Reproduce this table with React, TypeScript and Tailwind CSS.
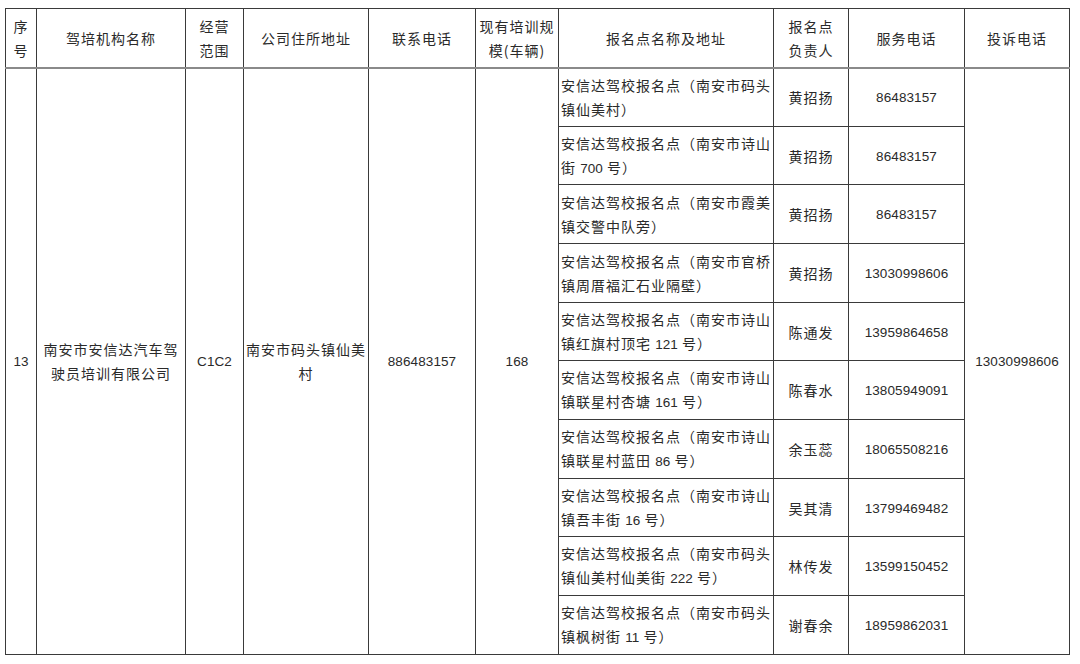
import React from 'react';

// One enrolment point: name/address lines, person in charge, service phone
interface Point {
  lines: React.ReactNode[];
  person: string;
  phone: string;
}

const Num = ({ children }: { children: React.ReactNode }) => (
  <span className="font-['Liberation_Sans',sans-serif] text-[13.5px] tracking-[0.1px]">{children}</span>
);

const POINTS: Point[] = [
  { lines: ['安信达驾校报名点（南安市码头', '镇仙美村）'], person: '黄招扬', phone: '86483157' },
  { lines: ['安信达驾校报名点（南安市诗山', <>街 <Num>700</Num> 号）</>], person: '黄招扬', phone: '86483157' },
  { lines: ['安信达驾校报名点（南安市霞美', '镇交警中队旁）'], person: '黄招扬', phone: '86483157' },
  { lines: ['安信达驾校报名点（南安市官桥', '镇周厝福汇石业隔壁）'], person: '黄招扬', phone: '13030998606' },
  { lines: ['安信达驾校报名点（南安市诗山', <>镇红旗村顶宅 <Num>121</Num> 号）</>], person: '陈通发', phone: '13959864658' },
  { lines: ['安信达驾校报名点（南安市诗山', <>镇联星村杏塘 <Num>161</Num> 号）</>], person: '陈春水', phone: '13805949091' },
  { lines: ['安信达驾校报名点（南安市诗山', <>镇联星村蓝田 <Num>86</Num> 号）</>], person: '余玉蕊', phone: '18065508216' },
  { lines: ['安信达驾校报名点（南安市诗山', <>镇吾丰街 <Num>16</Num> 号）</>], person: '吴其清', phone: '13799469482' },
  { lines: ['安信达驾校报名点（南安市码头', <>镇仙美村仙美街 <Num>222</Num> 号）</>], person: '林传发', phone: '13599150452' },
  { lines: ['安信达驾校报名点（南安市码头', <>镇枫树街 <Num>11</Num> 号）</>], person: '谢春余', phone: '18959862031' },
];

const ROW_HEIGHTS = ['h-[59px]', 'h-[58px]', 'h-[59px]', 'h-[59px]', 'h-[58px]', 'h-[59px]', 'h-[59px]', 'h-[58px]', 'h-[59px]', 'h-[59px]'];

const cell = 'border border-[#3a3a3a] text-center align-middle p-0';
const head = 'border border-[#3a3a3a] border-b-2 border-b-[#8a8a8a] text-center align-middle p-0';

export default function App() {
  return (
    <div className="w-[1080px] h-[664px] bg-white pt-[8px] pl-[5px] font-['Noto_Sans_CJK_SC',sans-serif] text-[14px] leading-[24px] tracking-[1px] text-[#2a2a2a]">
      <table className="table-fixed border-collapse w-[1064px]">
        <colgroup>
          <col className="w-[31px]" />
          <col className="w-[149px]" />
          <col className="w-[58px]" />
          <col className="w-[125px]" />
          <col className="w-[107px]" />
          <col className="w-[83px]" />
          <col className="w-[215px]" />
          <col className="w-[75px]" />
          <col className="w-[116px]" />
          <col className="w-[105px]" />
        </colgroup>
        <thead>
          <tr className="h-[59px]">
            <th className={`${head} font-normal`}>序<br />号</th>
            <th className={`${head} font-normal`}>驾培机构名称</th>
            <th className={`${head} font-normal`}>经营<br />范围</th>
            <th className={`${head} font-normal`}>公司住所地址</th>
            <th className={`${head} font-normal`}>联系电话</th>
            <th className={`${head} font-normal`}>现有培训规<br />模(车辆)</th>
            <th className={`${head} font-normal`}>报名点名称及地址</th>
            <th className={`${head} font-normal`}>报名点<br />负责人</th>
            <th className={`${head} font-normal`}>服务电话</th>
            <th className={`${head} font-normal`}>投诉电话</th>
          </tr>
        </thead>
        <tbody>
          {POINTS.map((p, i) => (
            <tr key={i} className={ROW_HEIGHTS[i]}>
              {i === 0 && (
                <>
                  <td rowSpan={10} className={cell}><Num>13</Num></td>
                  <td rowSpan={10} className={`${cell} px-[4px]`}>南安市安信达汽车驾<br />驶员培训有限公司</td>
                  <td rowSpan={10} className={cell}><Num>C1C2</Num></td>
                  <td rowSpan={10} className={`${cell} px-[2px]`}>南安市码头镇仙美<br />村</td>
                  <td rowSpan={10} className={cell}><Num>886483157</Num></td>
                  <td rowSpan={10} className={cell}><Num>168</Num></td>
                </>
              )}
              <td className={`${cell} text-left pl-[2px] whitespace-nowrap`}>
                {p.lines.map((l, j) => (
                  <div key={j}>{l}</div>
                ))}
              </td>
              <td className={cell}>{p.person}</td>
              <td className={cell}><Num>{p.phone}</Num></td>
              {i === 0 && (
                <td rowSpan={10} className={cell}><Num>13030998606</Num></td>
              )}
            </tr>
          ))}
        </tbody>
      </table>
    </div>
  );
}
